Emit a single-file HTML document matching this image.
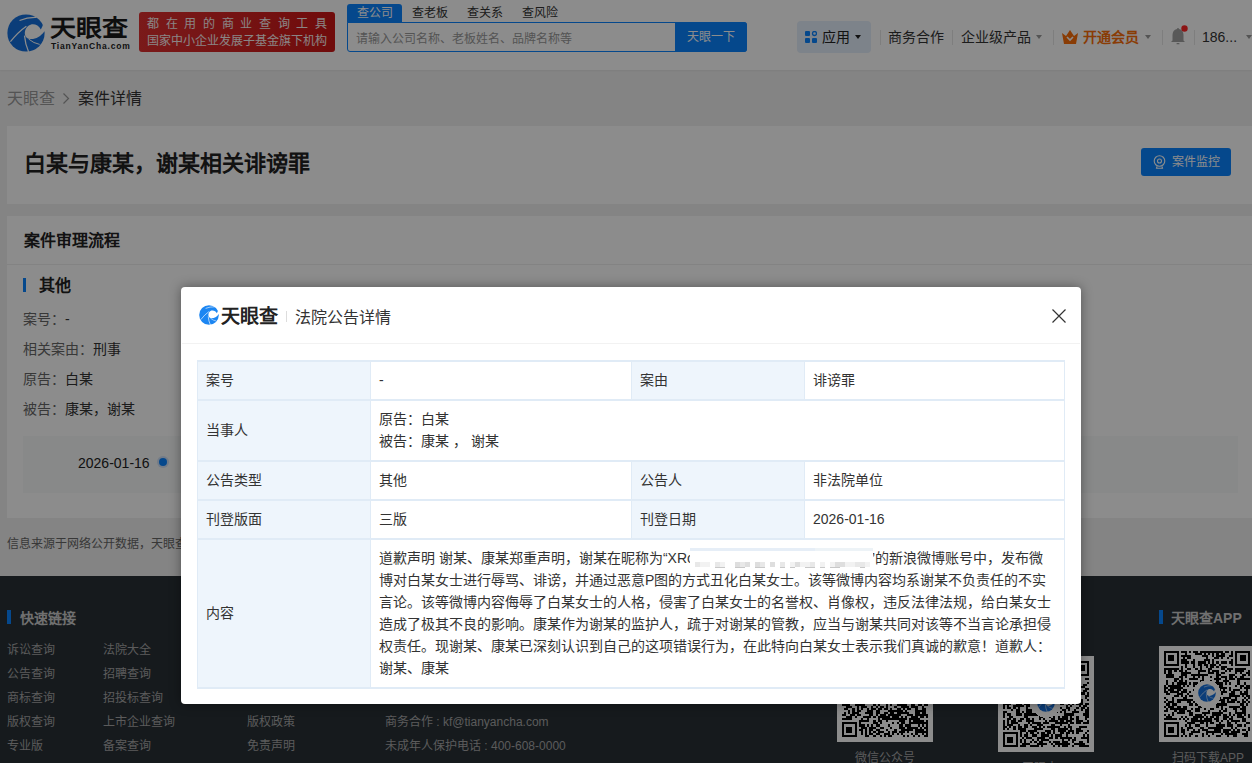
<!DOCTYPE html>
<html lang="zh-CN"><head><meta charset="utf-8">
<style>
*{box-sizing:border-box;margin:0;padding:0}
html,body{width:1252px;height:763px;overflow:hidden}
body{position:relative;background:#f1f1f1;font-family:"Liberation Sans",sans-serif;color:#333;font-size:14px}
.a{position:absolute;white-space:nowrap;line-height:1}
#hdr{position:absolute;left:0;top:0;width:1252px;height:70px;background:#fff;box-shadow:0 1px 2px rgba(0,0,0,.06)}
.card{position:absolute;background:#fff}
.dv{position:absolute;width:1px;height:15px;top:30px;background:#e6e6e6}
.ct{position:absolute;width:0;height:0;border-left:3px solid transparent;border-right:3px solid transparent;border-top:4px solid #333}
#foot{position:absolute;left:0;top:576px;width:1252px;height:187px;background:#283036}
.fl{position:absolute;font-size:12px;color:#a6a6a6;white-space:nowrap;line-height:1}
.qr{position:absolute;width:96px;height:96px;background:#fff;padding:5px}
.qr svg{display:block;width:86px;height:86px}
#mask{position:absolute;left:0;top:0;width:1252px;height:763px;background:rgba(0,0,0,.45)}
#modal{position:absolute;left:181px;top:287px;width:900px;height:417px;background:#fff;border-radius:4px;box-shadow:0 0 12px rgba(0,0,0,.4)}
#mh{position:absolute;left:1px;top:0;width:898px;height:57px;border-bottom:1px solid #f2f2f2}
table{position:absolute;left:16px;top:73px;width:867px;border-collapse:collapse;table-layout:fixed}
td{border:1px solid #e0ebf6;box-shadow:inset 0 1px 0 #e0ebf6;padding:8px 8px 8px 8px;line-height:22px;font-size:14px;color:#333;vertical-align:middle}
td.l{background:#eef5fc}
</style></head><body>
<div id="hdr">
 <svg viewBox="0 0 100 100" width="38" height="38" style="position:absolute;left:7px;top:14px"><circle cx="50" cy="50" r="49" fill="#1570dc"/><path d="M89 41C84 30 72 25 62 28C52 31 46 42 47 53C48 61 55 66 64 66C76 66 90 58 98 46L101 45L101 34L95 27C94 32 91 36 89 41Z" fill="#fff"/><path d="M9 73Q28 48 51 32" stroke="#fff" stroke-width="3.2" fill="none"/><path d="M46 57Q48 80 57 100" stroke="#fff" stroke-width="3.2" fill="none"/><path d="M33 17Q55 8 78 9" stroke="#fff" stroke-width="3" fill="none"/><path d="M57 66Q70 77 86 80" stroke="#fff" stroke-width="2.6" fill="none"/></svg>
 <div class="a" style="left:50px;top:17px;font-size:23px;font-weight:bold;color:#1a1a1a;transform:scaleX(1.13);transform-origin:0 0">天眼查</div>
 <div class="a" style="left:51px;top:42px;font-size:8.5px;font-weight:bold;color:#222;letter-spacing:.8px">TianYanCha.com</div>
 <div class="a" style="left:139px;top:12px;width:196px;height:40px;border-radius:3px;background:linear-gradient(90deg,#de3030,#cc1616)"></div>
 <div class="a" style="left:147px;top:18px;font-size:12px;color:#fbf2f2;letter-spacing:6.67px">都在用的商业查询工具</div>
 <div class="a" style="left:147px;top:35px;font-size:12px;color:#fbf2f2">国家中小企业发展子基金旗下机构</div>
 <div class="a" style="left:347px;top:4px;width:55px;height:19px;background:#0a84ff;border-radius:3px 3px 0 0"></div>
 <div class="a" style="left:357px;top:7px;font-size:12px;color:#fff">查公司</div>
 <div class="a" style="left:412px;top:7px;font-size:12px;color:#333">查老板</div>
 <div class="a" style="left:467px;top:7px;font-size:12px;color:#333">查关系</div>
 <div class="a" style="left:522px;top:7px;font-size:12px;color:#333">查风险</div>
 <div class="a" style="left:347px;top:22px;width:400px;height:30px;border:1px solid #0a84ff;border-radius:0 3px 3px 3px;background:#fff"></div>
 <div class="a" style="left:356px;top:33px;font-size:12px;color:#999">请输入公司名称、老板姓名、品牌名称等</div>
 <div class="a" style="left:675px;top:22px;width:72px;height:30px;background:#0a84ff;border-radius:0 3px 3px 0"></div>
 <div class="a" style="left:687px;top:31px;font-size:12px;color:#fff">天眼一下</div>
 <div class="a" style="left:797px;top:21px;width:74px;height:32px;background:#e4eefb;border-radius:4px"></div>
 <svg class="a" style="left:805px;top:31px" width="12" height="12" viewBox="0 0 12 12"><rect x="0" y="0" width="5" height="5" rx="1" fill="#0a84ff"/><rect x="0" y="7" width="5" height="5" rx="1" fill="#0a84ff"/><rect x="7" y="7" width="5" height="5" rx="1" fill="#0a84ff"/><circle cx="9.5" cy="2.5" r="2" stroke="#0a84ff" stroke-width="1.3" fill="none"/></svg>
 <div class="a" style="left:822px;top:30px;font-size:14px;font-weight:500;color:#222">应用</div>
 <div class="ct" style="left:855px;top:35px;border-top-color:#222"></div>
 <div class="dv" style="left:880px"></div>
 <div class="a" style="left:888px;top:30px;font-size:14px;color:#333">商务合作</div>
 <div class="dv" style="left:952px"></div>
 <div class="a" style="left:961px;top:30px;font-size:14px;color:#333">企业级产品</div>
 <div class="ct" style="left:1036px;top:35px;border-top-color:#999"></div>
 <div class="dv" style="left:1053px"></div>
 <svg class="a" style="left:1062px;top:30px" width="16" height="14" viewBox="0 0 16 14"><path d="M0 3L4 6L8 0L12 6L16 3L14 14H2Z" fill="#fa6e0a"/><path d="M5 7L8 10L11 7" stroke="#fff" stroke-width="1.6" fill="none"/></svg>
 <div class="a" style="left:1083px;top:30px;font-size:14px;font-weight:bold;color:#fa6e0a">开通会员</div>
 <div class="ct" style="left:1145px;top:35px;border-top-color:#999"></div>
 <div class="dv" style="left:1162px"></div>
 <svg class="a" style="left:1168px;top:25px" width="20" height="20" viewBox="0 0 20 20"><path d="M9 4Q9 3 10 3Q11 3 11 4C14 4.6 15.5 7 15.5 10V15.5L17 17H3L4.5 15.5V10C4.5 7 6 4.6 9 4Z" fill="#a0a0a0"/><rect x="8.5" y="18" width="3" height="1.3" rx=".6" fill="#a0a0a0"/><circle cx="16.5" cy="3.5" r="3.2" fill="#ff2626"/></svg>
 <div class="dv" style="left:1194px"></div>
 <div class="a" style="left:1202px;top:30px;font-size:14px;color:#333">186...</div>
 <div class="ct" style="left:1246px;top:35px;border-top-color:#999"></div>
</div>
<div class="a" style="left:7px;top:91px;font-size:16px;color:#999">天眼查</div>
<svg class="a" style="left:62px;top:92px" width="8" height="13" viewBox="0 0 8 13"><path d="M1.5 1.5L6.5 6.5L1.5 11.5" stroke="#999" stroke-width="1.2" fill="none"/></svg>
<div class="a" style="left:78px;top:91px;font-size:16px;color:#333">案件详情</div>
<div class="card" style="left:7px;top:126px;width:1250px;height:78px">
 <div class="a" style="left:17px;top:27px;font-size:22px;font-weight:bold;color:#222">白某与康某，谢某相关诽谤罪</div>
 <div class="a" style="left:1134px;top:22px;width:90px;height:28px;background:#0a84ff;border-radius:3px"></div>
 <svg class="a" style="left:1146px;top:29px" width="13" height="14" viewBox="0 0 13 14"><circle cx="6.5" cy="6" r="5.3" stroke="#fff" stroke-width="1.1" fill="none"/><circle cx="6.5" cy="6" r="2" stroke="#fff" stroke-width="1.1" fill="none"/><path d="M4 11.5L3.5 13.3H9.5L9 11.5" stroke="#fff" stroke-width="1.1" fill="none"/></svg>
 <div class="a" style="left:1165px;top:30px;font-size:12px;color:#fff">案件监控</div>
</div>
<div class="card" style="left:7px;top:216px;width:1250px;height:302px">
 <div class="a" style="left:17px;top:17px;font-size:16px;font-weight:bold;color:#222">案件审理流程</div>
 <div class="a" style="left:0;top:48px;width:1250px;height:1px;background:#eeeeee"></div>
 <div class="a" style="left:16px;top:62px;width:3px;height:14px;background:#0a84ff"></div>
 <div class="a" style="left:32px;top:62px;font-size:16px;font-weight:bold;color:#222">其他</div>
 <div class="a" style="left:16px;top:96px;font-size:14px;color:#666">案号：<span style="color:#333">-</span></div>
 <div class="a" style="left:16px;top:126px;font-size:14px;color:#666">相关案由：<span style="color:#333">刑事</span></div>
 <div class="a" style="left:16px;top:156px;font-size:14px;color:#666">原告：<span style="color:#333">白某</span></div>
 <div class="a" style="left:16px;top:186px;font-size:14px;color:#666">被告：<span style="color:#333">康某，谢某</span></div>
 <div class="a" style="left:16px;top:220px;width:1215px;height:57px;background:#f7f9f9"></div>
 <div class="a" style="left:71px;top:240px;font-size:14px;color:#222">2026-01-16</div>
 <div class="a" style="left:152px;top:242px;width:8px;height:8px;border-radius:50%;background:#0a84ff;box-shadow:0 0 0 2px #cfe0f7"></div>
</div>
<div class="a" style="left:7px;top:538px;font-size:12px;color:#666">信息来源于网络公开数据，天眼查不对其内容的真实性与准确性做出任何保证</div>
<div id="foot">
 <div class="a" style="left:7px;top:34px;width:4px;height:14px;background:#0a84ff"></div>
 <div class="a" style="left:20px;top:35px;font-size:14px;font-weight:bold;color:#ccc">快速链接</div>
 <div class="fl" style="left:7px;top:68px">诉讼查询</div>
 <div class="fl" style="left:7px;top:92px">公告查询</div>
 <div class="fl" style="left:7px;top:116px">商标查询</div>
 <div class="fl" style="left:7px;top:140px">版权查询</div>
 <div class="fl" style="left:7px;top:164px">专业版</div>
 <div class="fl" style="left:103px;top:68px">法院大全</div>
 <div class="fl" style="left:103px;top:92px">招聘查询</div>
 <div class="fl" style="left:103px;top:116px">招投标查询</div>
 <div class="fl" style="left:103px;top:140px">上市企业查询</div>
 <div class="fl" style="left:103px;top:164px">备案查询</div>
 <div class="fl" style="left:247px;top:140px">版权政策</div>
 <div class="fl" style="left:247px;top:164px">免责声明</div>
 <div class="fl" style="left:385px;top:140px">商务合作 : kf@tianyancha.com</div>
 <div class="fl" style="left:385px;top:164px">未成年人保护电话 : 400-608-0000</div>
 <div class="qr" style="left:837px;top:70px"><svg viewBox="0 0 41 41" shape-rendering="crispEdges"><path d="M0 0h7v1h-7zM10 0h3v1h-3zM15 0h1v1h-1zM20 0h2v1h-2zM23 0h6v1h-6zM30 0h1v1h-1zM32 0h1v1h-1zM34 0h7v1h-7zM0 1h1v1h-1zM6 1h1v1h-1zM9 1h2v1h-2zM12 1h1v1h-1zM14 1h2v1h-2zM18 1h3v1h-3zM23 1h4v1h-4zM28 1h1v1h-1zM30 1h2v1h-2zM34 1h1v1h-1zM40 1h1v1h-1zM0 2h1v1h-1zM2 2h3v1h-3zM6 2h1v1h-1zM8 2h2v1h-2zM11 2h4v1h-4zM16 2h1v1h-1zM18 2h2v1h-2zM21 2h1v1h-1zM24 2h2v1h-2zM28 2h2v1h-2zM32 2h1v1h-1zM34 2h1v1h-1zM36 2h3v1h-3zM40 2h1v1h-1zM0 3h1v1h-1zM2 3h3v1h-3zM6 3h1v1h-1zM8 3h1v1h-1zM12 3h1v1h-1zM14 3h7v1h-7zM22 3h2v1h-2zM29 3h3v1h-3zM34 3h1v1h-1zM36 3h3v1h-3zM40 3h1v1h-1zM0 4h1v1h-1zM2 4h3v1h-3zM6 4h1v1h-1zM8 4h1v1h-1zM12 4h1v1h-1zM17 4h1v1h-1zM20 4h1v1h-1zM25 4h1v1h-1zM28 4h1v1h-1zM30 4h1v1h-1zM32 4h1v1h-1zM34 4h1v1h-1zM36 4h3v1h-3zM40 4h1v1h-1zM0 5h1v1h-1zM6 5h1v1h-1zM9 5h1v1h-1zM11 5h2v1h-2zM16 5h1v1h-1zM18 5h3v1h-3zM25 5h6v1h-6zM32 5h1v1h-1zM34 5h1v1h-1zM40 5h1v1h-1zM0 6h7v1h-7zM9 6h3v1h-3zM13 6h1v1h-1zM19 6h5v1h-5zM25 6h3v1h-3zM32 6h1v1h-1zM34 6h7v1h-7zM8 7h1v1h-1zM13 7h1v1h-1zM19 7h1v1h-1zM22 7h3v1h-3zM27 7h2v1h-2zM30 7h1v1h-1zM32 7h1v1h-1zM1 8h1v1h-1zM3 8h2v1h-2zM6 8h1v1h-1zM12 8h2v1h-2zM16 8h1v1h-1zM21 8h1v1h-1zM23 8h1v1h-1zM25 8h1v1h-1zM27 8h2v1h-2zM31 8h1v1h-1zM33 8h1v1h-1zM35 8h1v1h-1zM38 8h3v1h-3zM0 9h1v1h-1zM3 9h3v1h-3zM8 9h1v1h-1zM10 9h3v1h-3zM14 9h2v1h-2zM17 9h1v1h-1zM19 9h4v1h-4zM24 9h3v1h-3zM28 9h2v1h-2zM36 9h1v1h-1zM40 9h1v1h-1zM0 10h1v1h-1zM2 10h1v1h-1zM5 10h2v1h-2zM8 10h2v1h-2zM11 10h1v1h-1zM13 10h2v1h-2zM16 10h2v1h-2zM21 10h2v1h-2zM24 10h1v1h-1zM26 10h4v1h-4zM31 10h1v1h-1zM33 10h3v1h-3zM39 10h2v1h-2zM1 11h1v1h-1zM3 11h4v1h-4zM8 11h1v1h-1zM11 11h2v1h-2zM14 11h5v1h-5zM24 11h1v1h-1zM26 11h1v1h-1zM29 11h1v1h-1zM34 11h1v1h-1zM40 11h1v1h-1zM1 12h5v1h-5zM8 12h1v1h-1zM11 12h1v1h-1zM15 12h1v1h-1zM21 12h1v1h-1zM24 12h7v1h-7zM33 12h1v1h-1zM39 12h1v1h-1zM1 13h1v1h-1zM3 13h4v1h-4zM8 13h1v1h-1zM10 13h1v1h-1zM13 13h2v1h-2zM17 13h1v1h-1zM19 13h5v1h-5zM25 13h1v1h-1zM28 13h1v1h-1zM31 13h1v1h-1zM33 13h2v1h-2zM36 13h1v1h-1zM40 13h1v1h-1zM3 14h1v1h-1zM5 14h3v1h-3zM9 14h2v1h-2zM12 14h2v1h-2zM15 14h1v1h-1zM21 14h2v1h-2zM26 14h2v1h-2zM33 14h2v1h-2zM38 14h3v1h-3zM0 15h1v1h-1zM2 15h1v1h-1zM4 15h2v1h-2zM9 15h4v1h-4zM15 15h2v1h-2zM20 15h3v1h-3zM24 15h1v1h-1zM27 15h1v1h-1zM31 15h3v1h-3zM35 15h2v1h-2zM38 15h1v1h-1zM40 15h1v1h-1zM1 16h2v1h-2zM4 16h2v1h-2zM8 16h3v1h-3zM12 16h2v1h-2zM19 16h1v1h-1zM21 16h3v1h-3zM26 16h7v1h-7zM38 16h1v1h-1zM0 17h3v1h-3zM8 17h1v1h-1zM11 17h2v1h-2zM15 17h1v1h-1zM17 17h1v1h-1zM20 17h2v1h-2zM25 17h2v1h-2zM29 17h1v1h-1zM34 17h1v1h-1zM5 18h3v1h-3zM10 18h5v1h-5zM16 18h3v1h-3zM21 18h3v1h-3zM26 18h5v1h-5zM33 18h4v1h-4zM38 18h1v1h-1zM0 19h2v1h-2zM4 19h1v1h-1zM7 19h3v1h-3zM12 19h1v1h-1zM14 19h2v1h-2zM18 19h4v1h-4zM25 19h4v1h-4zM30 19h1v1h-1zM33 19h1v1h-1zM35 19h1v1h-1zM37 19h1v1h-1zM0 20h2v1h-2zM3 20h3v1h-3zM9 20h1v1h-1zM11 20h1v1h-1zM13 20h1v1h-1zM15 20h1v1h-1zM18 20h1v1h-1zM20 20h5v1h-5zM26 20h1v1h-1zM28 20h3v1h-3zM34 20h2v1h-2zM37 20h1v1h-1zM39 20h2v1h-2zM2 21h1v1h-1zM4 21h2v1h-2zM7 21h3v1h-3zM11 21h2v1h-2zM14 21h1v1h-1zM18 21h1v1h-1zM20 21h3v1h-3zM25 21h2v1h-2zM29 21h6v1h-6zM36 21h2v1h-2zM0 22h5v1h-5zM10 22h3v1h-3zM14 22h3v1h-3zM20 22h1v1h-1zM24 22h3v1h-3zM29 22h1v1h-1zM32 22h1v1h-1zM35 22h3v1h-3zM40 22h1v1h-1zM1 23h3v1h-3zM5 23h1v1h-1zM10 23h1v1h-1zM15 23h1v1h-1zM17 23h1v1h-1zM19 23h1v1h-1zM22 23h1v1h-1zM24 23h3v1h-3zM30 23h1v1h-1zM33 23h1v1h-1zM36 23h5v1h-5zM1 24h3v1h-3zM5 24h1v1h-1zM7 24h1v1h-1zM9 24h1v1h-1zM12 24h2v1h-2zM18 24h1v1h-1zM22 24h2v1h-2zM28 24h1v1h-1zM30 24h2v1h-2zM37 24h1v1h-1zM39 24h2v1h-2zM0 25h4v1h-4zM6 25h5v1h-5zM15 25h1v1h-1zM17 25h1v1h-1zM21 25h1v1h-1zM23 25h1v1h-1zM26 25h5v1h-5zM33 25h2v1h-2zM36 25h2v1h-2zM39 25h2v1h-2zM2 26h3v1h-3zM7 26h1v1h-1zM9 26h3v1h-3zM14 26h1v1h-1zM16 26h1v1h-1zM18 26h2v1h-2zM21 26h1v1h-1zM25 26h1v1h-1zM28 26h4v1h-4zM33 26h3v1h-3zM38 26h1v1h-1zM1 27h2v1h-2zM5 27h1v1h-1zM7 27h1v1h-1zM9 27h1v1h-1zM12 27h1v1h-1zM14 27h2v1h-2zM17 27h2v1h-2zM20 27h2v1h-2zM23 27h1v1h-1zM26 27h2v1h-2zM29 27h1v1h-1zM31 27h2v1h-2zM35 27h1v1h-1zM38 27h2v1h-2zM3 28h1v1h-1zM5 28h1v1h-1zM7 28h2v1h-2zM12 28h3v1h-3zM16 28h2v1h-2zM22 28h7v1h-7zM30 28h1v1h-1zM35 28h5v1h-5zM1 29h1v1h-1zM3 29h1v1h-1zM5 29h3v1h-3zM11 29h4v1h-4zM16 29h2v1h-2zM20 29h2v1h-2zM23 29h2v1h-2zM26 29h6v1h-6zM35 29h2v1h-2zM38 29h2v1h-2zM0 30h2v1h-2zM4 30h2v1h-2zM7 30h2v1h-2zM13 30h2v1h-2zM16 30h1v1h-1zM18 30h3v1h-3zM22 30h6v1h-6zM31 30h3v1h-3zM35 30h6v1h-6zM2 31h3v1h-3zM6 31h1v1h-1zM10 31h4v1h-4zM15 31h1v1h-1zM17 31h6v1h-6zM24 31h3v1h-3zM28 31h1v1h-1zM30 31h1v1h-1zM33 31h3v1h-3zM37 31h2v1h-2zM40 31h1v1h-1zM0 32h5v1h-5zM9 32h1v1h-1zM12 32h1v1h-1zM17 32h1v1h-1zM19 32h12v1h-12zM32 32h5v1h-5zM8 33h5v1h-5zM15 33h1v1h-1zM17 33h2v1h-2zM21 33h1v1h-1zM27 33h3v1h-3zM32 33h1v1h-1zM34 33h5v1h-5zM40 33h1v1h-1zM0 34h7v1h-7zM8 34h1v1h-1zM15 34h2v1h-2zM18 34h1v1h-1zM24 34h1v1h-1zM26 34h1v1h-1zM28 34h2v1h-2zM32 34h9v1h-9zM0 35h1v1h-1zM6 35h1v1h-1zM8 35h3v1h-3zM12 35h1v1h-1zM14 35h1v1h-1zM16 35h2v1h-2zM22 35h1v1h-1zM27 35h2v1h-2zM30 35h3v1h-3zM36 35h1v1h-1zM38 35h1v1h-1zM40 35h1v1h-1zM0 36h1v1h-1zM2 36h3v1h-3zM6 36h1v1h-1zM9 36h3v1h-3zM13 36h3v1h-3zM18 36h2v1h-2zM23 36h1v1h-1zM27 36h3v1h-3zM31 36h5v1h-5zM37 36h1v1h-1zM39 36h2v1h-2zM0 37h1v1h-1zM2 37h3v1h-3zM6 37h1v1h-1zM8 37h2v1h-2zM11 37h1v1h-1zM13 37h2v1h-2zM16 37h2v1h-2zM21 37h1v1h-1zM25 37h1v1h-1zM28 37h6v1h-6zM35 37h4v1h-4zM40 37h1v1h-1zM0 38h1v1h-1zM2 38h3v1h-3zM6 38h1v1h-1zM9 38h1v1h-1zM11 38h1v1h-1zM13 38h1v1h-1zM15 38h1v1h-1zM17 38h3v1h-3zM22 38h1v1h-1zM24 38h2v1h-2zM27 38h3v1h-3zM31 38h1v1h-1zM35 38h6v1h-6zM0 39h1v1h-1zM6 39h1v1h-1zM9 39h1v1h-1zM11 39h1v1h-1zM13 39h2v1h-2zM16 39h2v1h-2zM20 39h3v1h-3zM24 39h1v1h-1zM26 39h1v1h-1zM28 39h1v1h-1zM33 39h1v1h-1zM35 39h1v1h-1zM38 39h1v1h-1zM40 39h1v1h-1zM0 40h7v1h-7zM11 40h2v1h-2zM15 40h1v1h-1zM18 40h1v1h-1zM20 40h1v1h-1zM22 40h2v1h-2zM29 40h1v1h-1zM31 40h1v1h-1zM34 40h1v1h-1zM36 40h1v1h-1zM39 40h2v1h-2z" fill="#000"/></svg></div>
 <div class="fl" style="left:855px;top:176px">微信公众号</div>
 <div class="qr" style="left:998px;top:80px"><svg viewBox="0 0 41 41" shape-rendering="crispEdges"><path d="M0 0h7v1h-7zM12 0h5v1h-5zM19 0h3v1h-3zM25 0h1v1h-1zM27 0h1v1h-1zM31 0h1v1h-1zM34 0h7v1h-7zM0 1h1v1h-1zM6 1h1v1h-1zM8 1h2v1h-2zM13 1h4v1h-4zM18 1h1v1h-1zM20 1h3v1h-3zM24 1h1v1h-1zM26 1h1v1h-1zM28 1h1v1h-1zM30 1h1v1h-1zM34 1h1v1h-1zM40 1h1v1h-1zM0 2h1v1h-1zM2 2h3v1h-3zM6 2h1v1h-1zM8 2h1v1h-1zM10 2h3v1h-3zM17 2h1v1h-1zM19 2h3v1h-3zM24 2h1v1h-1zM27 2h1v1h-1zM29 2h4v1h-4zM34 2h1v1h-1zM36 2h3v1h-3zM40 2h1v1h-1zM0 3h1v1h-1zM2 3h3v1h-3zM6 3h1v1h-1zM8 3h4v1h-4zM13 3h2v1h-2zM18 3h1v1h-1zM22 3h3v1h-3zM28 3h2v1h-2zM32 3h1v1h-1zM34 3h1v1h-1zM36 3h3v1h-3zM40 3h1v1h-1zM0 4h1v1h-1zM2 4h3v1h-3zM6 4h1v1h-1zM8 4h1v1h-1zM10 4h1v1h-1zM12 4h1v1h-1zM15 4h1v1h-1zM19 4h3v1h-3zM25 4h1v1h-1zM27 4h3v1h-3zM34 4h1v1h-1zM36 4h3v1h-3zM40 4h1v1h-1zM0 5h1v1h-1zM6 5h1v1h-1zM9 5h8v1h-8zM18 5h1v1h-1zM21 5h7v1h-7zM29 5h3v1h-3zM34 5h1v1h-1zM40 5h1v1h-1zM0 6h7v1h-7zM8 6h1v1h-1zM10 6h1v1h-1zM12 6h2v1h-2zM15 6h1v1h-1zM18 6h2v1h-2zM23 6h1v1h-1zM25 6h1v1h-1zM30 6h1v1h-1zM34 6h7v1h-7zM9 7h2v1h-2zM14 7h3v1h-3zM20 7h2v1h-2zM24 7h1v1h-1zM26 7h4v1h-4zM32 7h1v1h-1zM0 8h3v1h-3zM4 8h2v1h-2zM8 8h1v1h-1zM10 8h1v1h-1zM12 8h1v1h-1zM14 8h2v1h-2zM18 8h2v1h-2zM21 8h1v1h-1zM23 8h1v1h-1zM28 8h3v1h-3zM32 8h2v1h-2zM35 8h1v1h-1zM39 8h2v1h-2zM3 9h1v1h-1zM5 9h2v1h-2zM9 9h1v1h-1zM15 9h1v1h-1zM18 9h1v1h-1zM21 9h3v1h-3zM25 9h9v1h-9zM35 9h1v1h-1zM4 10h2v1h-2zM7 10h1v1h-1zM9 10h3v1h-3zM14 10h1v1h-1zM16 10h2v1h-2zM19 10h1v1h-1zM22 10h1v1h-1zM24 10h1v1h-1zM26 10h1v1h-1zM28 10h1v1h-1zM30 10h1v1h-1zM32 10h2v1h-2zM40 10h1v1h-1zM1 11h1v1h-1zM3 11h3v1h-3zM7 11h4v1h-4zM14 11h3v1h-3zM24 11h2v1h-2zM31 11h2v1h-2zM34 11h2v1h-2zM38 11h2v1h-2zM1 12h1v1h-1zM5 12h2v1h-2zM10 12h4v1h-4zM15 12h1v1h-1zM18 12h1v1h-1zM20 12h2v1h-2zM23 12h4v1h-4zM28 12h2v1h-2zM31 12h1v1h-1zM33 12h1v1h-1zM35 12h4v1h-4zM2 13h1v1h-1zM4 13h3v1h-3zM8 13h2v1h-2zM12 13h2v1h-2zM16 13h1v1h-1zM18 13h2v1h-2zM22 13h1v1h-1zM24 13h4v1h-4zM29 13h2v1h-2zM34 13h1v1h-1zM36 13h1v1h-1zM39 13h2v1h-2zM4 14h4v1h-4zM9 14h7v1h-7zM22 14h4v1h-4zM28 14h3v1h-3zM32 14h1v1h-1zM35 14h1v1h-1zM38 14h2v1h-2zM1 15h1v1h-1zM3 15h4v1h-4zM8 15h3v1h-3zM12 15h1v1h-1zM14 15h6v1h-6zM21 15h2v1h-2zM24 15h2v1h-2zM28 15h1v1h-1zM30 15h2v1h-2zM33 15h1v1h-1zM37 15h2v1h-2zM40 15h1v1h-1zM0 16h1v1h-1zM2 16h1v1h-1zM4 16h1v1h-1zM6 16h2v1h-2zM9 16h1v1h-1zM11 16h1v1h-1zM13 16h5v1h-5zM20 16h4v1h-4zM26 16h3v1h-3zM30 16h1v1h-1zM33 16h1v1h-1zM35 16h2v1h-2zM39 16h2v1h-2zM0 17h1v1h-1zM2 17h4v1h-4zM15 17h1v1h-1zM17 17h2v1h-2zM20 17h3v1h-3zM28 17h1v1h-1zM30 17h1v1h-1zM33 17h2v1h-2zM39 17h1v1h-1zM0 18h1v1h-1zM8 18h5v1h-5zM14 18h1v1h-1zM18 18h4v1h-4zM25 18h1v1h-1zM28 18h1v1h-1zM33 18h2v1h-2zM36 18h2v1h-2zM40 18h1v1h-1zM1 19h2v1h-2zM4 19h5v1h-5zM12 19h4v1h-4zM17 19h2v1h-2zM25 19h1v1h-1zM29 19h1v1h-1zM31 19h2v1h-2zM34 19h1v1h-1zM37 19h1v1h-1zM0 20h4v1h-4zM6 20h3v1h-3zM10 20h3v1h-3zM15 20h1v1h-1zM19 20h1v1h-1zM21 20h8v1h-8zM31 20h1v1h-1zM33 20h1v1h-1zM35 20h3v1h-3zM39 20h2v1h-2zM0 21h1v1h-1zM2 21h1v1h-1zM5 21h5v1h-5zM11 21h2v1h-2zM14 21h2v1h-2zM17 21h2v1h-2zM22 21h1v1h-1zM25 21h1v1h-1zM30 21h1v1h-1zM32 21h1v1h-1zM36 21h1v1h-1zM38 21h2v1h-2zM0 22h1v1h-1zM2 22h2v1h-2zM5 22h1v1h-1zM7 22h1v1h-1zM11 22h1v1h-1zM17 22h1v1h-1zM22 22h1v1h-1zM24 22h1v1h-1zM27 22h1v1h-1zM30 22h2v1h-2zM35 22h1v1h-1zM37 22h2v1h-2zM40 22h1v1h-1zM4 23h1v1h-1zM6 23h2v1h-2zM11 23h3v1h-3zM15 23h2v1h-2zM18 23h2v1h-2zM22 23h4v1h-4zM28 23h2v1h-2zM31 23h1v1h-1zM34 23h1v1h-1zM37 23h1v1h-1zM39 23h2v1h-2zM0 24h2v1h-2zM6 24h2v1h-2zM9 24h1v1h-1zM11 24h3v1h-3zM17 24h2v1h-2zM20 24h1v1h-1zM23 24h3v1h-3zM27 24h1v1h-1zM29 24h1v1h-1zM33 24h3v1h-3zM39 24h2v1h-2zM0 25h1v1h-1zM2 25h2v1h-2zM6 25h3v1h-3zM10 25h7v1h-7zM18 25h2v1h-2zM21 25h3v1h-3zM29 25h5v1h-5zM38 25h3v1h-3zM0 26h1v1h-1zM3 26h2v1h-2zM10 26h2v1h-2zM17 26h2v1h-2zM21 26h2v1h-2zM24 26h1v1h-1zM26 26h1v1h-1zM28 26h3v1h-3zM32 26h1v1h-1zM35 26h1v1h-1zM39 26h2v1h-2zM2 27h2v1h-2zM5 27h1v1h-1zM8 27h2v1h-2zM11 27h2v1h-2zM14 27h1v1h-1zM17 27h1v1h-1zM19 27h1v1h-1zM23 27h2v1h-2zM26 27h5v1h-5zM32 27h2v1h-2zM35 27h1v1h-1zM39 27h1v1h-1zM0 28h1v1h-1zM2 28h1v1h-1zM4 28h2v1h-2zM7 28h2v1h-2zM11 28h4v1h-4zM20 28h1v1h-1zM22 28h4v1h-4zM27 28h2v1h-2zM30 28h3v1h-3zM35 28h3v1h-3zM40 28h1v1h-1zM0 29h1v1h-1zM2 29h1v1h-1zM4 29h3v1h-3zM12 29h1v1h-1zM14 29h4v1h-4zM19 29h3v1h-3zM25 29h6v1h-6zM32 29h2v1h-2zM35 29h2v1h-2zM38 29h3v1h-3zM0 30h1v1h-1zM2 30h3v1h-3zM7 30h1v1h-1zM10 30h2v1h-2zM13 30h1v1h-1zM16 30h3v1h-3zM23 30h2v1h-2zM27 30h1v1h-1zM31 30h1v1h-1zM0 31h2v1h-2zM3 31h1v1h-1zM5 31h1v1h-1zM7 31h2v1h-2zM10 31h2v1h-2zM14 31h2v1h-2zM17 31h1v1h-1zM19 31h1v1h-1zM21 31h6v1h-6zM29 31h1v1h-1zM31 31h2v1h-2zM36 31h4v1h-4zM0 32h1v1h-1zM2 32h1v1h-1zM5 32h1v1h-1zM7 32h4v1h-4zM15 32h4v1h-4zM23 32h2v1h-2zM26 32h5v1h-5zM32 32h1v1h-1zM35 32h2v1h-2zM8 33h3v1h-3zM12 33h4v1h-4zM20 33h3v1h-3zM24 33h1v1h-1zM26 33h4v1h-4zM31 33h3v1h-3zM35 33h3v1h-3zM40 33h1v1h-1zM0 34h7v1h-7zM8 34h1v1h-1zM11 34h1v1h-1zM13 34h2v1h-2zM16 34h1v1h-1zM18 34h2v1h-2zM21 34h2v1h-2zM24 34h1v1h-1zM27 34h2v1h-2zM30 34h2v1h-2zM33 34h1v1h-1zM35 34h1v1h-1zM39 34h1v1h-1zM0 35h1v1h-1zM6 35h1v1h-1zM8 35h1v1h-1zM10 35h2v1h-2zM14 35h2v1h-2zM18 35h4v1h-4zM23 35h1v1h-1zM25 35h3v1h-3zM30 35h1v1h-1zM38 35h1v1h-1zM40 35h1v1h-1zM0 36h1v1h-1zM2 36h3v1h-3zM6 36h1v1h-1zM9 36h1v1h-1zM11 36h3v1h-3zM16 36h4v1h-4zM22 36h2v1h-2zM25 36h1v1h-1zM27 36h6v1h-6zM34 36h1v1h-1zM37 36h4v1h-4zM0 37h1v1h-1zM2 37h3v1h-3zM6 37h1v1h-1zM8 37h1v1h-1zM10 37h1v1h-1zM14 37h1v1h-1zM16 37h1v1h-1zM18 37h4v1h-4zM28 37h1v1h-1zM31 37h1v1h-1zM33 37h2v1h-2zM40 37h1v1h-1zM0 38h1v1h-1zM2 38h3v1h-3zM6 38h1v1h-1zM8 38h1v1h-1zM10 38h1v1h-1zM13 38h1v1h-1zM15 38h1v1h-1zM17 38h2v1h-2zM22 38h1v1h-1zM24 38h3v1h-3zM28 38h3v1h-3zM33 38h1v1h-1zM36 38h2v1h-2zM40 38h1v1h-1zM0 39h1v1h-1zM6 39h1v1h-1zM9 39h4v1h-4zM16 39h5v1h-5zM23 39h1v1h-1zM25 39h7v1h-7zM34 39h5v1h-5zM0 40h7v1h-7zM8 40h3v1h-3zM13 40h4v1h-4zM18 40h1v1h-1zM24 40h1v1h-1zM26 40h1v1h-1zM28 40h3v1h-3zM33 40h1v1h-1zM36 40h5v1h-5z" fill="#000"/><circle cx="20.5" cy="20.5" r="6.6" fill="#fff"/></svg></div>
 <svg viewBox="0 0 100 100" width="18" height="18" style="position:absolute;left:1037px;top:118px"><circle cx="50" cy="50" r="49" fill="#1570dc"/><path d="M89 41C84 30 72 25 62 28C52 31 46 42 47 53C48 61 55 66 64 66C76 66 90 58 98 46L101 45L101 34L95 27C94 32 91 36 89 41Z" fill="#fff"/><path d="M9 73Q28 48 51 32" stroke="#fff" stroke-width="3.2" fill="none"/><path d="M46 57Q48 80 57 100" stroke="#fff" stroke-width="3.2" fill="none"/><path d="M33 17Q55 8 78 9" stroke="#fff" stroke-width="3" fill="none"/><path d="M57 66Q70 77 86 80" stroke="#fff" stroke-width="2.6" fill="none"/></svg>
 <div class="fl" style="left:1022px;top:186px">天眼查</div>
 <div class="a" style="left:1159px;top:34px;width:4px;height:14px;background:#0a84ff"></div>
 <div class="a" style="left:1171px;top:35px;font-size:14px;font-weight:bold;color:#ccc">天眼查APP</div>
 <div class="qr" style="left:1159px;top:70px"><svg viewBox="0 0 41 41" shape-rendering="crispEdges"><path d="M0 0h7v1h-7zM8 0h3v1h-3zM12 0h1v1h-1zM14 0h2v1h-2zM17 0h11v1h-11zM29 0h2v1h-2zM32 0h1v1h-1zM34 0h7v1h-7zM0 1h1v1h-1zM6 1h1v1h-1zM10 1h1v1h-1zM15 1h3v1h-3zM19 1h1v1h-1zM21 1h1v1h-1zM23 1h1v1h-1zM25 1h1v1h-1zM27 1h2v1h-2zM32 1h1v1h-1zM34 1h1v1h-1zM40 1h1v1h-1zM0 2h1v1h-1zM2 2h3v1h-3zM6 2h1v1h-1zM8 2h5v1h-5zM18 2h3v1h-3zM23 2h1v1h-1zM25 2h4v1h-4zM31 2h2v1h-2zM34 2h1v1h-1zM36 2h3v1h-3zM40 2h1v1h-1zM0 3h1v1h-1zM2 3h3v1h-3zM6 3h1v1h-1zM9 3h1v1h-1zM11 3h2v1h-2zM20 3h1v1h-1zM24 3h2v1h-2zM27 3h1v1h-1zM30 3h1v1h-1zM34 3h1v1h-1zM36 3h3v1h-3zM40 3h1v1h-1zM0 4h1v1h-1zM2 4h3v1h-3zM6 4h1v1h-1zM8 4h3v1h-3zM14 4h1v1h-1zM19 4h3v1h-3zM23 4h1v1h-1zM32 4h1v1h-1zM34 4h1v1h-1zM36 4h3v1h-3zM40 4h1v1h-1zM0 5h1v1h-1zM6 5h1v1h-1zM8 5h4v1h-4zM13 5h2v1h-2zM16 5h4v1h-4zM21 5h1v1h-1zM23 5h1v1h-1zM25 5h1v1h-1zM27 5h3v1h-3zM31 5h2v1h-2zM34 5h1v1h-1zM40 5h1v1h-1zM0 6h7v1h-7zM10 6h1v1h-1zM14 6h1v1h-1zM16 6h2v1h-2zM19 6h2v1h-2zM22 6h3v1h-3zM26 6h1v1h-1zM32 6h1v1h-1zM34 6h7v1h-7zM8 7h1v1h-1zM10 7h1v1h-1zM14 7h1v1h-1zM17 7h1v1h-1zM20 7h1v1h-1zM22 7h2v1h-2zM25 7h1v1h-1zM27 7h3v1h-3zM0 8h7v1h-7zM8 8h1v1h-1zM11 8h2v1h-2zM15 8h1v1h-1zM17 8h1v1h-1zM21 8h2v1h-2zM27 8h2v1h-2zM30 8h3v1h-3zM34 8h5v1h-5zM0 9h1v1h-1zM2 9h2v1h-2zM5 9h1v1h-1zM7 9h2v1h-2zM10 9h1v1h-1zM16 9h4v1h-4zM21 9h1v1h-1zM23 9h3v1h-3zM29 9h1v1h-1zM31 9h1v1h-1zM34 9h4v1h-4zM40 9h1v1h-1zM0 10h1v1h-1zM2 10h2v1h-2zM8 10h5v1h-5zM16 10h1v1h-1zM21 10h3v1h-3zM25 10h1v1h-1zM27 10h2v1h-2zM34 10h1v1h-1zM36 10h1v1h-1zM39 10h2v1h-2zM1 11h4v1h-4zM8 11h3v1h-3zM13 11h8v1h-8zM25 11h2v1h-2zM31 11h3v1h-3zM37 11h2v1h-2zM40 11h1v1h-1zM1 12h4v1h-4zM7 12h2v1h-2zM10 12h1v1h-1zM14 12h1v1h-1zM16 12h1v1h-1zM18 12h1v1h-1zM22 12h1v1h-1zM25 12h1v1h-1zM27 12h3v1h-3zM31 12h2v1h-2zM34 12h1v1h-1zM36 12h2v1h-2zM5 13h2v1h-2zM8 13h1v1h-1zM12 13h4v1h-4zM18 13h1v1h-1zM24 13h3v1h-3zM29 13h1v1h-1zM31 13h3v1h-3zM35 13h6v1h-6zM1 14h1v1h-1zM5 14h1v1h-1zM7 14h2v1h-2zM10 14h1v1h-1zM17 14h3v1h-3zM22 14h1v1h-1zM25 14h1v1h-1zM28 14h3v1h-3zM35 14h1v1h-1zM1 15h1v1h-1zM4 15h1v1h-1zM6 15h5v1h-5zM12 15h1v1h-1zM14 15h2v1h-2zM17 15h1v1h-1zM19 15h1v1h-1zM22 15h1v1h-1zM24 15h4v1h-4zM29 15h1v1h-1zM31 15h1v1h-1zM35 15h1v1h-1zM38 15h1v1h-1zM0 16h1v1h-1zM2 16h6v1h-6zM9 16h1v1h-1zM11 16h1v1h-1zM14 16h1v1h-1zM17 16h2v1h-2zM20 16h1v1h-1zM22 16h1v1h-1zM24 16h1v1h-1zM26 16h2v1h-2zM34 16h1v1h-1zM36 16h2v1h-2zM39 16h2v1h-2zM0 17h2v1h-2zM3 17h6v1h-6zM15 17h4v1h-4zM20 17h3v1h-3zM24 17h1v1h-1zM26 17h4v1h-4zM31 17h1v1h-1zM36 17h1v1h-1zM38 17h3v1h-3zM0 18h1v1h-1zM2 18h3v1h-3zM6 18h2v1h-2zM9 18h2v1h-2zM14 18h1v1h-1zM19 18h1v1h-1zM21 18h4v1h-4zM26 18h1v1h-1zM28 18h1v1h-1zM31 18h1v1h-1zM33 18h3v1h-3zM39 18h1v1h-1zM0 19h2v1h-2zM3 19h4v1h-4zM8 19h3v1h-3zM12 19h1v1h-1zM14 19h1v1h-1zM17 19h4v1h-4zM22 19h1v1h-1zM24 19h1v1h-1zM26 19h4v1h-4zM32 19h2v1h-2zM36 19h1v1h-1zM38 19h2v1h-2zM1 20h2v1h-2zM6 20h3v1h-3zM11 20h1v1h-1zM15 20h1v1h-1zM24 20h2v1h-2zM27 20h1v1h-1zM31 20h3v1h-3zM36 20h4v1h-4zM5 21h2v1h-2zM8 21h1v1h-1zM10 21h1v1h-1zM12 21h5v1h-5zM18 21h1v1h-1zM22 21h2v1h-2zM25 21h2v1h-2zM31 21h5v1h-5zM37 21h1v1h-1zM39 21h2v1h-2zM0 22h1v1h-1zM4 22h1v1h-1zM9 22h2v1h-2zM15 22h1v1h-1zM17 22h2v1h-2zM23 22h4v1h-4zM28 22h4v1h-4zM34 22h1v1h-1zM38 22h1v1h-1zM40 22h1v1h-1zM1 23h1v1h-1zM4 23h1v1h-1zM6 23h8v1h-8zM15 23h1v1h-1zM17 23h1v1h-1zM24 23h1v1h-1zM26 23h3v1h-3zM30 23h1v1h-1zM32 23h3v1h-3zM37 23h1v1h-1zM39 23h1v1h-1zM0 24h1v1h-1zM2 24h3v1h-3zM6 24h2v1h-2zM11 24h2v1h-2zM14 24h1v1h-1zM17 24h8v1h-8zM27 24h2v1h-2zM30 24h4v1h-4zM35 24h1v1h-1zM37 24h2v1h-2zM40 24h1v1h-1zM1 25h2v1h-2zM4 25h2v1h-2zM12 25h2v1h-2zM15 25h1v1h-1zM17 25h3v1h-3zM21 25h2v1h-2zM25 25h5v1h-5zM36 25h2v1h-2zM39 25h1v1h-1zM0 26h1v1h-1zM2 26h3v1h-3zM6 26h2v1h-2zM9 26h2v1h-2zM16 26h2v1h-2zM19 26h3v1h-3zM25 26h1v1h-1zM27 26h1v1h-1zM31 26h5v1h-5zM37 26h2v1h-2zM1 27h1v1h-1zM3 27h8v1h-8zM13 27h1v1h-1zM15 27h2v1h-2zM19 27h1v1h-1zM22 27h2v1h-2zM27 27h1v1h-1zM29 27h1v1h-1zM33 27h2v1h-2zM36 27h3v1h-3zM0 28h2v1h-2zM5 28h1v1h-1zM7 28h3v1h-3zM11 28h2v1h-2zM15 28h2v1h-2zM21 28h1v1h-1zM26 28h1v1h-1zM28 28h2v1h-2zM34 28h1v1h-1zM37 28h2v1h-2zM4 29h1v1h-1zM6 29h4v1h-4zM12 29h2v1h-2zM18 29h4v1h-4zM23 29h5v1h-5zM31 29h1v1h-1zM34 29h5v1h-5zM0 30h1v1h-1zM2 30h1v1h-1zM4 30h1v1h-1zM12 30h2v1h-2zM15 30h3v1h-3zM19 30h1v1h-1zM23 30h4v1h-4zM28 30h2v1h-2zM31 30h1v1h-1zM33 30h1v1h-1zM35 30h2v1h-2zM38 30h1v1h-1zM40 30h1v1h-1zM1 31h3v1h-3zM8 31h1v1h-1zM10 31h1v1h-1zM14 31h5v1h-5zM20 31h1v1h-1zM22 31h2v1h-2zM25 31h1v1h-1zM28 31h3v1h-3zM32 31h1v1h-1zM35 31h3v1h-3zM40 31h1v1h-1zM0 32h6v1h-6zM7 32h1v1h-1zM9 32h1v1h-1zM11 32h1v1h-1zM13 32h3v1h-3zM17 32h1v1h-1zM19 32h4v1h-4zM24 32h2v1h-2zM28 32h2v1h-2zM31 32h2v1h-2zM37 32h2v1h-2zM10 33h1v1h-1zM13 33h10v1h-10zM25 33h1v1h-1zM27 33h1v1h-1zM30 33h1v1h-1zM32 33h4v1h-4zM37 33h2v1h-2zM0 34h7v1h-7zM11 34h4v1h-4zM17 34h2v1h-2zM20 34h1v1h-1zM22 34h2v1h-2zM26 34h1v1h-1zM30 34h2v1h-2zM34 34h1v1h-1zM39 34h2v1h-2zM0 35h1v1h-1zM6 35h1v1h-1zM10 35h1v1h-1zM12 35h1v1h-1zM15 35h2v1h-2zM20 35h1v1h-1zM25 35h4v1h-4zM30 35h3v1h-3zM35 35h2v1h-2zM38 35h1v1h-1zM0 36h1v1h-1zM2 36h3v1h-3zM6 36h1v1h-1zM8 36h1v1h-1zM11 36h3v1h-3zM17 36h2v1h-2zM21 36h7v1h-7zM32 36h1v1h-1zM34 36h1v1h-1zM40 36h1v1h-1zM0 37h1v1h-1zM2 37h3v1h-3zM6 37h1v1h-1zM8 37h2v1h-2zM11 37h1v1h-1zM14 37h1v1h-1zM16 37h1v1h-1zM18 37h3v1h-3zM24 37h3v1h-3zM28 37h4v1h-4zM33 37h1v1h-1zM35 37h1v1h-1zM37 37h2v1h-2zM40 37h1v1h-1zM0 38h1v1h-1zM2 38h3v1h-3zM6 38h1v1h-1zM8 38h2v1h-2zM13 38h4v1h-4zM20 38h7v1h-7zM28 38h3v1h-3zM32 38h4v1h-4zM39 38h1v1h-1zM0 39h1v1h-1zM6 39h1v1h-1zM9 39h1v1h-1zM12 39h2v1h-2zM18 39h1v1h-1zM20 39h1v1h-1zM23 39h1v1h-1zM27 39h1v1h-1zM29 39h6v1h-6zM37 39h3v1h-3zM0 40h7v1h-7zM8 40h1v1h-1zM10 40h1v1h-1zM12 40h1v1h-1zM15 40h1v1h-1zM18 40h1v1h-1zM21 40h1v1h-1zM25 40h2v1h-2zM30 40h1v1h-1zM33 40h2v1h-2zM38 40h2v1h-2z" fill="#000"/><circle cx="20.5" cy="20.5" r="6.6" fill="#fff"/></svg></div>
 <svg viewBox="0 0 100 100" width="18" height="18" style="position:absolute;left:1198px;top:108px"><circle cx="50" cy="50" r="49" fill="#1570dc"/><path d="M89 41C84 30 72 25 62 28C52 31 46 42 47 53C48 61 55 66 64 66C76 66 90 58 98 46L101 45L101 34L95 27C94 32 91 36 89 41Z" fill="#fff"/><path d="M9 73Q28 48 51 32" stroke="#fff" stroke-width="3.2" fill="none"/><path d="M46 57Q48 80 57 100" stroke="#fff" stroke-width="3.2" fill="none"/><path d="M33 17Q55 8 78 9" stroke="#fff" stroke-width="3" fill="none"/><path d="M57 66Q70 77 86 80" stroke="#fff" stroke-width="2.6" fill="none"/></svg>
 <div class="fl" style="left:1172px;top:176px">扫码下载APP</div>
</div>
<div id="mask"></div>
<div id="modal">
 <div id="mh">
  <svg viewBox="0 0 100 100" width="20" height="20" style="position:absolute;left:17px;top:18px"><circle cx="50" cy="50" r="49" fill="#1c86f2"/><path d="M89 41C84 30 72 25 62 28C52 31 46 42 47 53C48 61 55 66 64 66C76 66 90 58 98 46L101 45L101 34L95 27C94 32 91 36 89 41Z" fill="#fff"/><path d="M9 73Q28 48 51 32" stroke="#fff" stroke-width="3.2" fill="none"/><path d="M46 57Q48 80 57 100" stroke="#fff" stroke-width="3.2" fill="none"/><path d="M33 17Q55 8 78 9" stroke="#fff" stroke-width="3" fill="none"/><path d="M57 66Q70 77 86 80" stroke="#fff" stroke-width="2.6" fill="none"/></svg>
  <div class="a" style="left:39px;top:20px;font-size:19px;font-weight:bold;color:#222">天眼查</div>
  <div class="a" style="left:104px;top:24px;width:1px;height:11px;background:#ddd"></div>
  <div class="a" style="left:113px;top:23px;font-size:16px;color:#333">法院公告详情</div>
  <svg class="a" style="left:870px;top:22px" width="14" height="14" viewBox="0 0 14 14"><path d="M.5 .5L13.5 13.5M13.5 .5L.5 13.5" stroke="#333" stroke-width="1.2"/></svg>
 </div>
 <table>
  <colgroup><col style="width:173px"><col style="width:261px"><col style="width:173px"><col style="width:260px"></colgroup>
  <tr><td class="l">案号</td><td>-</td><td class="l">案由</td><td>诽谤罪</td></tr>
  <tr><td class="l">当事人</td><td colspan="3">原告：白某<br>被告：康某 ， 谢某</td></tr>
  <tr><td class="l">公告类型</td><td>其他</td><td class="l">公告人</td><td>非法院单位</td></tr>
  <tr><td class="l">刊登版面</td><td>三版</td><td class="l">刊登日期</td><td>2026-01-16</td></tr>
  <tr><td class="l">内容</td><td colspan="3" style="white-space:nowrap">道歉声明 谢某、康某郑重声明，谢某在昵称为“XRc<span style="display:inline-block;width:178px;height:14px"></span>’的新浪微博账号中，发布微<br>博对白某女士进行辱骂、诽谤，并通过恶意P图的方式丑化白某女士。该等微博内容均系谢某不负责任的不实<br>言论。该等微博内容侮辱了白某女士的人格，侵害了白某女士的名誉权、肖像权，违反法律法规，给白某女士<br>造成了极其不良的影响。康某作为谢某的监护人，疏于对谢某的管教，应当与谢某共同对该等不当言论承担侵<br>权责任。现谢某、康某已深刻认识到自己的这项错误行为，在此特向白某女士表示我们真诚的歉意！道歉人：<br>谢某、康某</td></tr>
 </table>
 <div class="a" style="left:16px;top:401px;width:868px;height:1px;background:#e0ebf6"></div>
 <div class="a" style="left:509px;top:260px;width:183px;height:22px;background:#fff"></div>
 <svg class="a" style="left:509px;top:261px" width="183" height="20" viewBox="0 0 183 20"><rect x="0" y="0" width="125" height="3" fill="#e6eef7"/><rect x="125" y="0" width="58" height="3" fill="#edf3f7"/><rect x="5" y="14" width="5" height="5" fill="#e8e8e8"/><rect x="10" y="14" width="5" height="5" fill="#f2f2f2"/><rect x="15" y="14" width="5" height="5" fill="#f2f2f2"/><rect x="25" y="14" width="5" height="5" fill="#e8e8e8"/><rect x="25" y="19" width="5" height="1" fill="#c8c8c8"/><rect x="30" y="14" width="5" height="5" fill="#f2f2f2"/><rect x="30" y="19" width="5" height="1" fill="#c8c8c8"/><rect x="45" y="14" width="5" height="5" fill="#dedede"/><rect x="45" y="19" width="5" height="1" fill="#c8c8c8"/><rect x="50" y="14" width="5" height="5" fill="#e8e8e8"/><rect x="50" y="19" width="5" height="1" fill="#c8c8c8"/><rect x="55" y="14" width="5" height="5" fill="#dedede"/><rect x="65" y="14" width="5" height="5" fill="#dedede"/><rect x="65" y="19" width="5" height="1" fill="#c8c8c8"/><rect x="70" y="14" width="5" height="5" fill="#e8e8e8"/><rect x="70" y="19" width="5" height="1" fill="#c8c8c8"/><rect x="80" y="14" width="5" height="5" fill="#dedede"/><rect x="90" y="14" width="5" height="5" fill="#e8e8e8"/><rect x="90" y="19" width="5" height="1" fill="#c8c8c8"/><rect x="100" y="14" width="5" height="5" fill="#f2f2f2"/><rect x="100" y="19" width="5" height="1" fill="#c8c8c8"/><rect x="105" y="14" width="5" height="5" fill="#dedede"/><rect x="110" y="14" width="5" height="5" fill="#f2f2f2"/><rect x="115" y="14" width="5" height="5" fill="#f2f2f2"/><rect x="115" y="19" width="5" height="1" fill="#c8c8c8"/><rect x="120" y="14" width="5" height="5" fill="#e8e8e8"/><rect x="120" y="19" width="5" height="1" fill="#c8c8c8"/><rect x="130" y="14" width="5" height="5" fill="#f2f2f2"/><rect x="130" y="19" width="5" height="1" fill="#c8c8c8"/><rect x="140" y="14" width="5" height="5" fill="#f2f2f2"/><rect x="140" y="19" width="5" height="1" fill="#c8c8c8"/><rect x="145" y="14" width="5" height="5" fill="#dedede"/><rect x="145" y="19" width="5" height="1" fill="#c8c8c8"/><rect x="150" y="14" width="5" height="5" fill="#dedede"/><rect x="155" y="14" width="5" height="5" fill="#f2f2f2"/><rect x="160" y="14" width="5" height="5" fill="#f2f2f2"/><rect x="165" y="14" width="5" height="5" fill="#e8e8e8"/><rect x="170" y="14" width="5" height="5" fill="#e8e8e8"/><rect x="170" y="19" width="5" height="1" fill="#c8c8c8"/><rect x="175" y="14" width="5" height="5" fill="#f2f2f2"/></svg>
</div>
</body></html>
